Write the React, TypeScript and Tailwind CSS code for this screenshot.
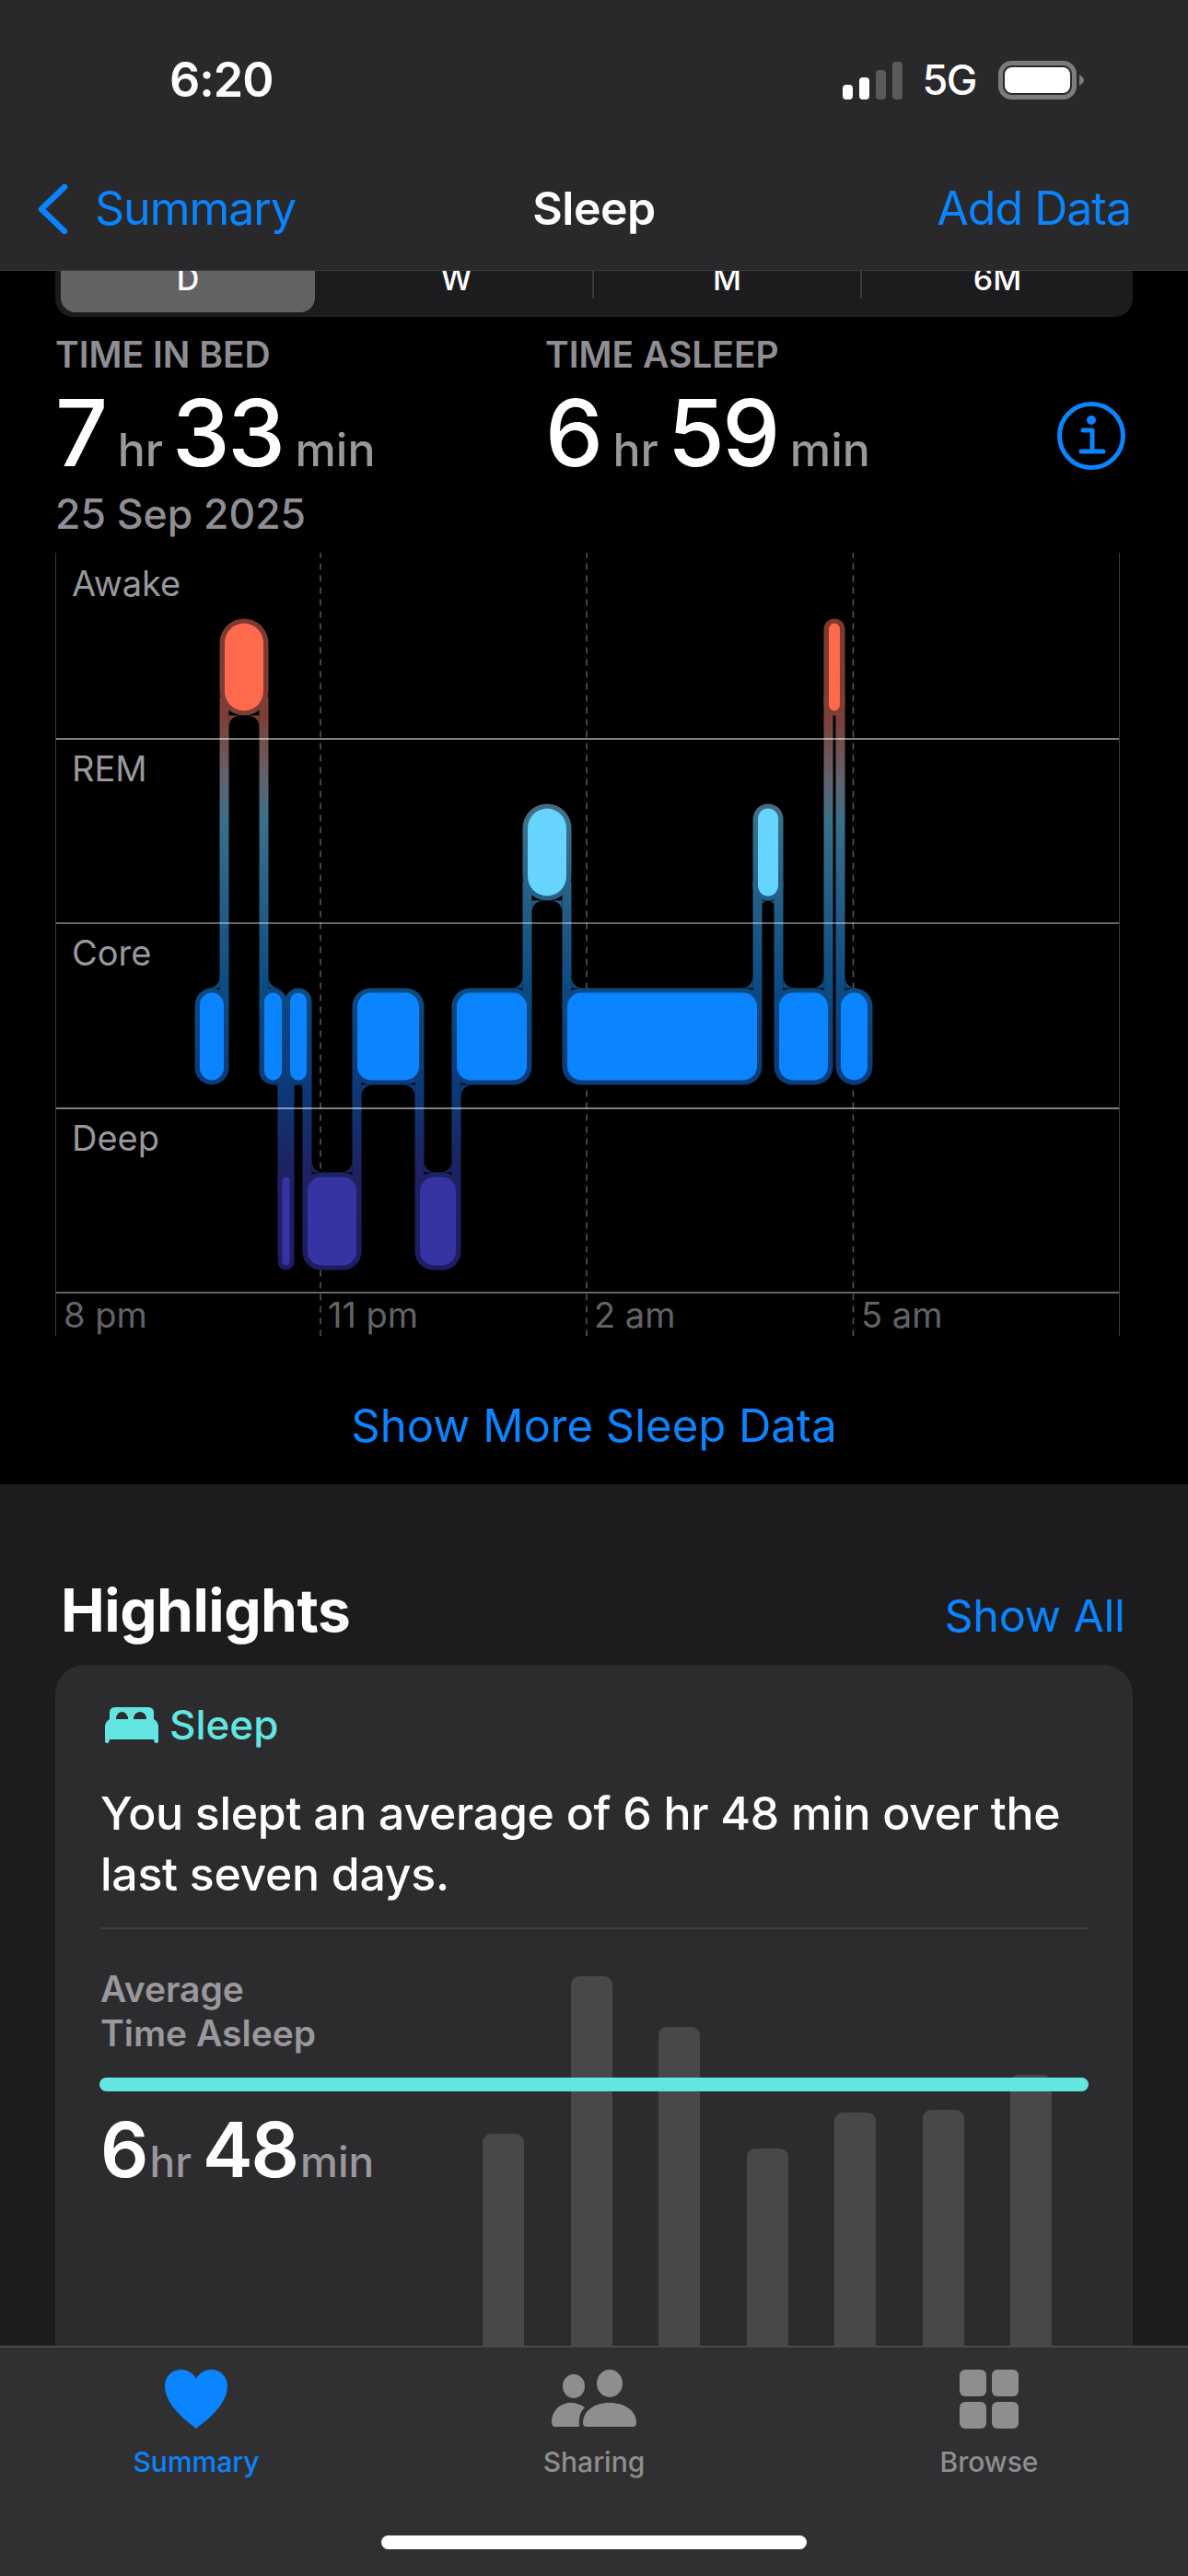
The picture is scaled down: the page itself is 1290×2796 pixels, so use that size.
import React from "react";

type Block = { x0: number; x1: number; level: "awake" | "rem" | "core" | "deep" };

const levels = {
  awake: { y0: 676, y1: 771, fill: "#ff6a4d" },
  rem: { y0: 877, y1: 972, fill: "#66d4ff" },
  core: { y0: 1077, y1: 1172, fill: "#0a84ff" },
  deep: { y0: 1277, y1: 1373, fill: "#3634a3" },
};

const blocks: Block[] = [
  { x0: 217, x1: 244, level: "core" },
  { x0: 244, x1: 287, level: "awake" },
  { x0: 287, x1: 307, level: "core" },
  { x0: 307, x1: 315, level: "deep" },
  { x0: 315, x1: 334, level: "core" },
  { x0: 334, x1: 388, level: "deep" },
  { x0: 388, x1: 456, level: "core" },
  { x0: 456, x1: 496, level: "deep" },
  { x0: 496, x1: 573, level: "core" },
  { x0: 573, x1: 616, level: "rem" },
  { x0: 616, x1: 823, level: "core" },
  { x0: 823, x1: 846, level: "rem" },
  { x0: 846, x1: 900, level: "core" },
  { x0: 900, x1: 913, level: "awake" },
  { x0: 913, x1: 943, level: "core" },
];

function radius(b: Block) {
  const w = b.x1 - b.x0;
  const cap = b.level === "awake" || b.level === "rem" ? 22 : 15;
  return Math.min(w / 2, cap);
}

// small curved web where a connector meets a block's halo
function fillet(x: number, y: number, sx: number, sy: number, r: number) {
  return `M${x} ${y}L${x + sx * r} ${y}Q${x} ${y} ${x} ${y + sy * r}Z`;
}

function Hypnogram() {
  const halo = "url(#sleepHalo)";
  return (
    <svg className="absolute left-0 top-0 z-0" width="1156" height="850" viewBox="61.500 599.500 1156 850" fill="none">
      <defs>
        <linearGradient id="sleepHalo" gradientUnits="userSpaceOnUse" x1="0" y1="671" x2="0" y2="1378">
          <stop offset="0" stopColor="#7c3a2f" />
          <stop offset="0.15" stopColor="#7c3f36" />
          <stop offset="0.24" stopColor="#66606a" />
          <stop offset="0.31" stopColor="#3a7089" />
          <stop offset="0.57" stopColor="#0c4a82" />
          <stop offset="0.72" stopColor="#0c3a78" />
          <stop offset="0.84" stopColor="#1d2262" />
          <stop offset="1" stopColor="#1e1d60" />
        </linearGradient>
      </defs>
      {[348.5, 637.5, 927].map((x) => (
        <line key={x} x1={x} x2={x} y1="598" y2="1450" stroke="#5a5a5c" strokeWidth="1.5" strokeDasharray="7 6" />
      ))}
      {blocks.map((b, i) => {
        const l = levels[b.level];
        return (
          <rect
            key={"h" + i}
            x={b.x0 - 5}
            y={l.y0 - 5}
            width={b.x1 - b.x0 + 10}
            height={l.y1 - l.y0 + 10}
            rx={radius(b) + 5}
            fill={halo}
          />
        );
      })}
      {blocks.slice(1).map((b, i) => {
        const prev = blocks[i];
        const a = levels[prev.level];
        const c = levels[b.level];
        const x = b.x0;
        const prevIsUpper = a.y0 < c.y0;
        const up = prevIsUpper ? a : c;
        const low = prevIsUpper ? c : a;
        const upper = prevIsUpper ? prev : b;
        const lower = prevIsUpper ? b : prev;
        // the upper block sits on one side of the connector, the lower on the other
        const upSide = upper === b ? 1 : -1;
        const lowSide = lower === b ? 1 : -1;
        const r1 = Math.max(Math.min(14, (upper.x1 - upper.x0 - 10) / 2), 0);
        const r2 = Math.min(14, lower.x1 - lower.x0 + 5);
        return (
          <g key={"c" + i} fill={halo}>
            <rect x={x - 5} y={up.y1 - 15} width="10" height={low.y0 - up.y1 + 30} />
            <path d={fillet(x + upSide * 5, up.y1 + 5, upSide, 1, r1)} />
            <path d={fillet(x + lowSide * 5, low.y0 - 5, lowSide, -1, r2)} />
          </g>
        );
      })}
      {blocks.map((b, i) => {
        const l = levels[b.level];
        return (
          <rect
            key={"b" + i}
            x={b.x0 + (b.x1 - b.x0 > 10 ? 0.5 : 0)}
            y={l.y0}
            width={b.x1 - b.x0 > 10 ? b.x1 - b.x0 - 1 : b.x1 - b.x0}
            height={l.y1 - l.y0}
            rx={radius(b)}
            fill={l.fill}
          />
        );
      })}
    </svg>
  );
}

function BedIcon() {
  return (
    <svg width="58" height="39" viewBox="0 0 58 39">
      <path
        fill="#63e6e2"
        fillRule="evenodd"
        d="M11 0H47Q53 0 53 6V13Q57 15 58 20V37Q58 39 56 39H55Q54 39 53.5 37L53 35H5L4.500 37Q4 39 3 39H2Q0 39 0 37V20Q1 15 5 13V6Q5 0 11 0ZM12 11V13H25V11Q23 5 18.500 5Q14 5 12 11ZM31 11V13H45V11Q43 5 38 5Q33 5 31 11Z"
      />
    </svg>
  );
}

function Measure({ a, b, big, small }: { a: string; b: string; big: string; small: string }) {
  return (
    <div className="flex items-baseline font-medium text-white">
      <span className={big}>{a}</span>
      <span className={`${small} text-[#98989d]`}>hr</span>
      <span className={big}>{b}</span>
      <span className={`${small} text-[#98989d]`}>min</span>
    </div>
  );
}

const sleepRows = ["Awake", "REM", "Core", "Deep"];
const ticks = ["8 pm", "11 pm", "2 am", "5 am"];
const weekBars = [230, 401, 346, 214, 253, 256, 294];

export default function App() {
  return (
    <div className="flex h-[2796px] w-[1290px] flex-col overflow-hidden bg-black [font-family:Inter,sans-serif]">
      <header className="h-[294px] shrink-0 border-b border-[#3a3a3c] bg-[#29292b] pt-[57px]">
        <div className="flex h-[60px] items-center pl-[184px] pr-[113px] text-white">
          <span className="text-[52px] font-semibold tracking-[-1px]">6:20</span>
          <div className="ml-auto flex items-center">
            <svg width="65" height="41" viewBox="0 0 65 41">
              <rect x="0" y="25" width="11" height="16" rx="4" fill="#fff" />
              <rect x="18" y="17" width="11" height="24" rx="4" fill="#fff" />
              <rect x="36" y="9" width="11" height="32" rx="4" fill="#5a5a5c" />
              <rect x="54" y="0" width="11" height="41" rx="4" fill="#5a5a5c" />
            </svg>
            <span className="ml-[22px] text-[45px] font-medium tracking-[-1.5px]">5G</span>
            <svg className="ml-[24px]" width="93" height="42" viewBox="0 0 93 42">
              <rect x="2.500" y="2.500" width="80" height="37" rx="12" fill="none" stroke="#7c7c7e" strokeWidth="5" />
              <rect x="7" y="7" width="71" height="28" rx="8" fill="#fff" />
              <path d="M88 15Q93 18 93 21Q93 24 88 27Z" fill="#7c7c7e" />
            </svg>
          </div>
        </div>
        <nav className="mt-[72px] grid h-[60px] grid-cols-[1fr_auto_1fr] items-center pl-[40px] pr-[40px] text-[50px]">
          <div className="flex items-center text-[#0a84ff]">
            <svg width="34" height="54" viewBox="0 0 34 54" fill="none">
              <path d="M30 3L5 27L30 51" stroke="#0a84ff" strokeWidth="6.500" strokeLinecap="round" strokeLinejoin="round" />
            </svg>
            <span className="ml-[29px] tracking-[-1px]">Summary</span>
          </div>
          <span className="font-semibold tracking-[-0.5px] text-white">Sleep</span>
          <span className="pr-[22px] text-right tracking-[-1px] text-[#0a84ff]">Add Data</span>
        </nav>
      </header>

      <main className="h-[1317px] shrink-0 bg-black">
        <div className="mx-[60px] flex h-[50px] overflow-hidden rounded-b-[20px] bg-[#1c1c1e] text-[34px] font-medium text-white">
          <div className="mb-[5px] ml-[6px] flex w-[276px] items-start justify-center rounded-b-[16px] bg-[#636366]">
            <span className="-mt-[17px]">D</span>
          </div>
          <div className="flex w-[301px] items-start justify-center pl-[6px]">
            <span className="-mt-[17px]">W</span>
          </div>
          <div className="flex h-[30px] w-[291px] items-start justify-center border-l-2 border-[#3a3a3c]">
            <span className="-mt-[17px]">M</span>
          </div>
          <div className="flex h-[30px] flex-1 items-start justify-center border-l-2 border-[#3a3a3c]">
            <span className="-mt-[17px]">6M</span>
          </div>
        </div>

        <section className="mt-[21px] px-[60px]">
          <div className="flex items-start">
            <div className="w-[532px]">
              <p className="h-[40px] text-[39px] font-semibold leading-[40px] text-[#8e8e93]">TIME IN BED</p>
              <div className="mt-[15px]">
                <Measure a="7" b="33" big="mr-[13px] text-[100px] leading-[100px] tracking-[-2.5px]" small="mr-[10px] text-[50px]" />
              </div>
            </div>
            <div className="flex-1">
              <p className="h-[40px] text-[39px] font-semibold leading-[40px] text-[#8e8e93]">TIME ASLEEP</p>
              <div className="mt-[15px]">
                <Measure a="6" b="59" big="mr-[13px] text-[100px] leading-[100px] tracking-[-2.5px]" small="mr-[10px] text-[50px]" />
              </div>
            </div>
            <svg className="mr-[8px] mt-[71px]" width="74" height="74" viewBox="0 0 74 74" fill="none">
              <circle cx="37" cy="37" r="34.500" stroke="#0a84ff" strokeWidth="5" />
              <circle cx="37" cy="20" r="5" fill="#0a84ff" />
              <path d="M28 31H38V54M26 54H50" stroke="#0a84ff" strokeWidth="5" strokeLinecap="round" strokeLinejoin="round" />
            </svg>
          </div>
          <p className="mt-[7px] text-[44.500px] font-medium leading-[50px] text-[#8e8e93]">25 Sep 2025</p>
        </section>

        <div className="relative mx-[60px] mt-[17px] h-[850px] w-[1156px] border-x border-[#3a3a3c]">
          <Hypnogram />
          <div className="relative z-10 pt-[2px] text-[38px] text-[#98989d]">
            {sleepRows.map((label, i) => (
              <div key={label} className={`h-[200.500px] border-b-2 pl-[17px] pt-[9px] leading-[44px] ${i % 2 ? "border-white/40" : "border-white/50"}`}>
                {label}
              </div>
            ))}
            <div className="grid grid-cols-[287px_289px_290px_1fr] pt-[1px] text-[#636366]">
              {ticks.map((t) => (
                <span key={t} className="pl-[8px] leading-[44px]">
                  {t}
                </span>
              ))}
            </div>
          </div>
        </div>

        <div className="mt-[68px] h-[60px] text-center text-[49px] leading-[60px] text-[#0a84ff]">Show More Sleep Data</div>
      </main>

      <section className="flex min-h-0 flex-1 flex-col bg-[#1c1c1e] pt-[102px]">
        <div className="flex items-baseline justify-between pl-[66px] pr-[68px]">
          <h2 className="text-[64px] font-bold leading-[70px] tracking-[-0.5px] text-white">Highlights</h2>
          <span className="text-[48px] text-[#0a84ff]">Show All</span>
        </div>
        <div className="relative mx-[60px] mt-[17px] flex-1 overflow-hidden rounded-t-[32px] bg-[#2c2c2e] px-[48px] pt-[40px]">
          <div className="absolute bottom-0 left-[464px] flex items-end gap-[50.500px]">
            {weekBars.map((h, i) => (
              <div key={i} className="w-[45px] rounded-t-[9px] bg-[#48484a]" style={{ height: h }} />
            ))}
          </div>
          <div className="relative z-10">
            <div className="flex items-center gap-[12px] pl-[6px] text-[44px] font-medium leading-[50px] text-[#63e6e2]">
              <BedIcon />
              <span>Sleep</span>
            </div>
            <p className="mt-[38px] pl-[1px] text-[50px] font-medium leading-[66px] tracking-[-0.3px] text-white">
              You slept an average of 6 hr 48 min over the
              <br />
              last seven days.
            </p>
            <div className="mt-[25px] h-[2px] bg-[#3f3f41]" />
            <p className="mt-[41px] pl-[1px] text-[39px] font-semibold leading-[48px] text-[#98989d]">
              Average
              <br />
              Time Asleep
            </p>
            <div className="mt-[24px] h-[15px] rounded-full bg-[#63e6e2]" />
            <div className="mt-[23px] pl-[1px]">
              <Measure a="6" b="48" big="mr-[3px] text-[82px] font-semibold leading-[82px] tracking-[-2px]" small="mr-[12px] text-[46px]" />
            </div>
          </div>
        </div>
      </section>

      <footer className="h-[250px] shrink-0 border-t-2 border-[#49494b] bg-[#303032]">
        <div className="grid grid-cols-[426px_438px_420px] pt-[24px] text-[30px] font-medium text-[#8e8e8e]">
          <div className="flex flex-col items-center text-[#0a84ff]">
            <svg width="68" height="64" viewBox="0 0 68 64">
              <path
                fill="#0a84ff"
                d="M34 64C31 61 0 41 0 18C0 7 8 0 18 0C25 0 31 4 34 10C37 4 43 0 50 0C60 0 68 7 68 18C68 41 37 61 34 64Z"
              />
            </svg>
            <span className="mt-[16px] leading-[40px]">Summary</span>
          </div>
          <div className="flex flex-col items-center">
            <svg width="94" height="64" viewBox="0 0 94 64" fill="#8e8e8e">
              <ellipse cx="25" cy="18" rx="12" ry="13" />
              <ellipse cx="64" cy="15" rx="14" ry="15" />
              <path d="M1 57C1 44 11 36 22 36C28 36 33 38 37 41C33 45 30 50 31 62H5Q1 62 1 57Z" />
              <path d="M35 58C35 45 47 36 64 36C81 36 93 45 93 58Q93 62 89 62H39Q35 62 35 58Z" />
            </svg>
            <span className="mt-[16px] leading-[40px]">Sharing</span>
          </div>
          <div className="flex flex-col items-center">
            <svg width="64" height="64" viewBox="0 0 64 64" fill="#8e8e8e">
              <rect x="0" y="0" width="29" height="29" rx="6" />
              <rect x="35" y="0" width="29" height="29" rx="6" />
              <rect x="0" y="35" width="29" height="29" rx="6" />
              <rect x="35" y="35" width="29" height="29" rx="6" />
            </svg>
            <span className="mt-[16px] leading-[40px]">Browse</span>
          </div>
        </div>
        <div className="mx-auto mt-[60px] h-[15px] w-[462px] rounded-full bg-white" />
      </footer>
    </div>
  );
}
